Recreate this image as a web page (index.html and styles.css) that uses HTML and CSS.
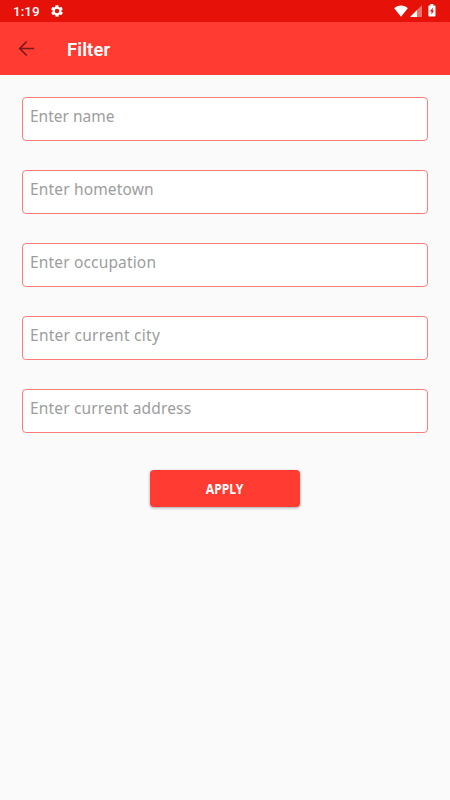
FILE: index.html
```html
<!DOCTYPE html>
<html lang="en">
<head>
<meta charset="utf-8">
<title>Filter</title>
<link rel="stylesheet" href="styles.css">
</head>
<body>
<div class="status">
  <span class="time">1:19</span>
  <svg class="gear" viewBox="0 0 24 24"><path fill="#fff" fill-rule="evenodd" d="M19.400 13c0-.3.1-.6.1-1s0-.7-.1-1l2.100-1.600c.2-.2.3-.4.1-.7l-2-3.400c-.1-.2-.4-.3-.6-.2l-2.500 1c-.5-.4-1.100-.7-1.700-1l-.4-2.600c0-.3-.2-.5-.5-.5h-4c-.3 0-.5.2-.5.5l-.4 2.600c-.6.300-1.200.600-1.700 1l-2.500-1c-.2-.1-.5 0-.6.200l-2 3.400c-.1.300-.1.500.1.700L4.600 11c0 .3-.1.600-.1 1s0 .700.1 1l-2.100 1.600c-.2.200-.3.400-.1.700l2 3.400c.1.200.4.300.6.200l2.500-1c.5.400 1.100.700 1.700 1l.4 2.600c0 .3.200.5.500.5h4c.3 0 .5-.2.5-.5l.4-2.600c.6-.3 1.200-.6 1.700-1l2.500 1c.2.100.5 0 .6-.2l2-3.400c.1-.3.1-.5-.1-.700zM12 15.800a3.800 3.800 0 1 1 0-7.600 3.800 3.800 0 0 1 0 7.600z"/></svg>
  <div class="signals">
    <svg class="wifi" viewBox="0 0 14 12"><path fill="#fff" d="M7 11.800.2 3.200C2 1.500 4.300.5 7 .5s5 1 6.800 2.700z"/></svg>
    <svg class="cell" viewBox="0 0 12 12"><path fill="#fff" fill-opacity=".4" d="M12 0v12H7V5z"/><path fill="#fff" d="M7 5v7H0z"/></svg>
    <svg class="battery" viewBox="0 0 8 13"><path fill="#fff" fill-rule="evenodd" d="M2.300 0h3v1.400h1.400q.8 0 .8.800v9.500q0 .8-.8.800H1.200q-.8 0-.8-.8V2.200q0-.8.800-.8h1.100zM4.800 3.500 2 7.400h1.500v3L6 6.500H4.600z"/></svg>
  </div>
</div>
<header class="bar">
  <svg class="back" viewBox="0 0 16 16"><path fill="none" stroke="#731b17" stroke-width="1.500" d="M15.200 8H2M8.200 1.400 1.600 8l6.600 6.600"/></svg>
  <h1 class="title">Filter</h1>
</header>
<main class="form">
  <div class="field"><span class="hint hint-short">Enter name</span></div>
  <div class="field"><span class="hint">Enter hometown</span></div>
  <div class="field"><span class="hint">Enter occupation</span></div>
  <div class="field"><span class="hint hint-wide">Enter current city</span></div>
  <div class="field"><span class="hint">Enter current address</span></div>
  <button class="apply" type="button"><span class="apply-text">APPLY</span></button>
</main>
</body>
</html>
```
FILE: styles.css
```css
* { box-sizing: border-box; }
body {
  margin: 0;
  height: 800px;
  background: #fafafa;
  font-family: Roboto, sans-serif;
  overflow: hidden;
}
.status {
  display: flex;
  align-items: center;
  height: 22px;
  padding: 0 14px 0 13px;
  background: #e61108;
  color: #fff;
}
.time { width: 37px; font-size: 13.500px; font-weight: 500; line-height: 22px; }
.gear { width: 14px; height: 14px; }
.signals { display: flex; align-items: center; margin-left: auto; height: 20px; }
.wifi { width: 14px; height: 12px; margin-right: 2px; }
.cell { width: 12px; height: 12px; margin-right: 6px; }
.battery { width: 8px; height: 13px; margin-top: -2px; }
.bar {
  display: flex;
  align-items: center;
  height: 53px;
  padding-left: 18px;
  background: #ff3b32;
}
.back { width: 17px; height: 17px; margin-right: 32px; }
.title { margin: 2px 0 0; color: #fff; font-size: 18.500px; font-weight: 600; line-height: 24px; letter-spacing: .1px; }
.form {
  display: flex;
  flex-direction: column;
  gap: 29px;
  padding: 22px 22px 0;
}
.field {
  height: 44px;
  padding: 7px;
  border: 1px solid #ff7d78;
  border-radius: 4px;
  background: #fff;
}
.hint {
  display: block;
  color: #9d9d9d;
  font-family: "Noto Sans", sans-serif;
  font-size: 15.500px;
  line-height: 22px;
  letter-spacing: .16px;
  white-space: nowrap;
}
.hint-short { letter-spacing: 0; }
.hint-wide { letter-spacing: .26px; }
.apply {
  align-self: center;
  width: 150px;
  height: 37px;
  margin-top: 8px;
  padding: 0;
  border: 0;
  border-radius: 4px;
  background: #ff3b32;
  box-shadow: 0 1px 3px rgba(0, 0, 0, .35);
  color: #fff;
  font: 700 14px/37px "Noto Sans", sans-serif;
}
.apply-text { display: inline-block; transform: scaleX(.87); }
```
